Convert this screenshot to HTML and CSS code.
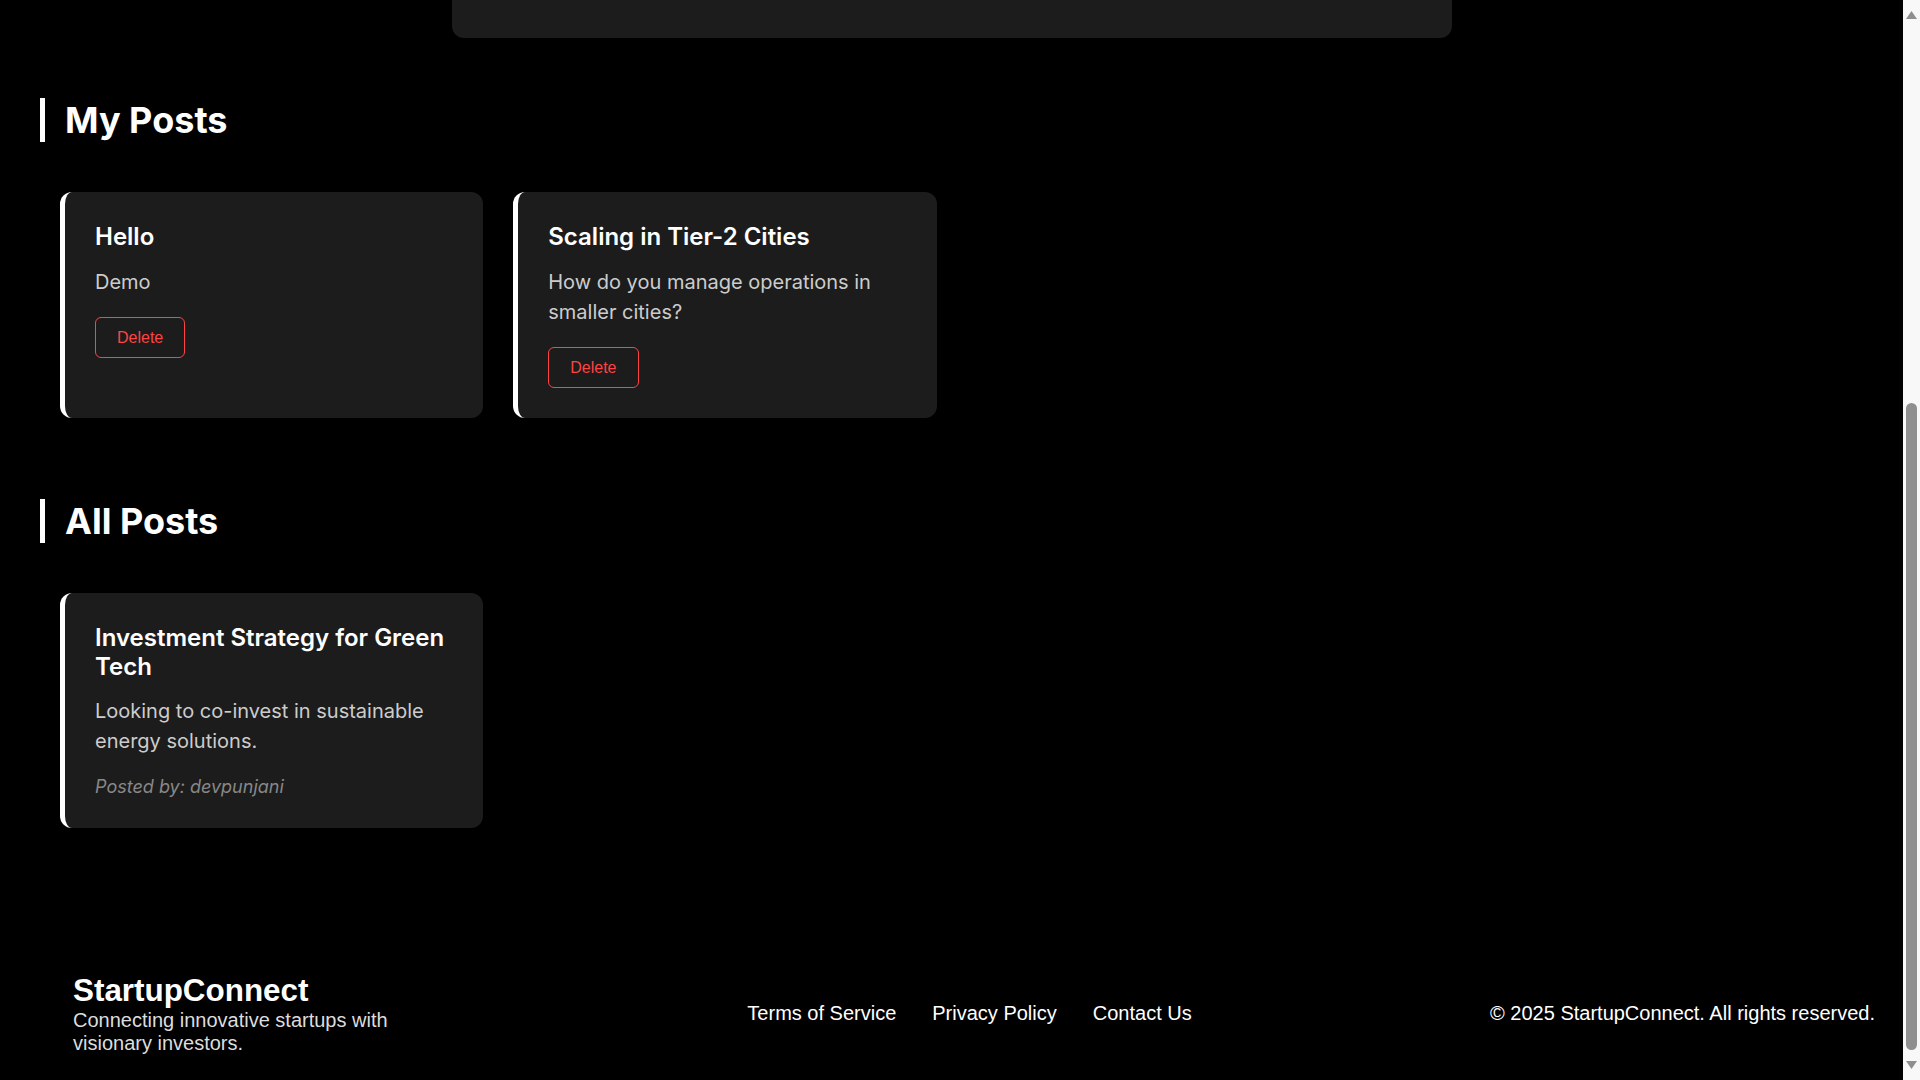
FILE: index.html
```
<!DOCTYPE html>
<html lang="en">
<head>
<meta charset="utf-8">
<title>StartupConnect – Community</title>
<link rel="stylesheet" href="styles.css">
</head>
<body>
<div class="viewport">
  <main class="page">
    <div class="composer-end"></div>

    <section class="section">
      <h2 class="section-title">My Posts</h2>
      <div class="post-grid">
        <article class="post-card">
          <h3 class="post-title">Hello</h3>
          <p class="post-body">Demo</p>
          <button class="btn-delete" type="button">Delete</button>
        </article>
        <article class="post-card">
          <h3 class="post-title">Scaling in Tier-2 Cities</h3>
          <p class="post-body">How do you manage operations in smaller cities?</p>
          <button class="btn-delete" type="button">Delete</button>
        </article>
      </div>
    </section>

    <section class="section">
      <h2 class="section-title">All Posts</h2>
      <div class="post-grid">
        <article class="post-card">
          <h3 class="post-title">Investment Strategy for Green Tech</h3>
          <p class="post-body">Looking to co-invest in sustainable energy solutions.</p>
          <p class="post-author">Posted by: devpunjani</p>
        </article>
      </div>
    </section>
  </main>

  <footer class="site-footer">
    <div class="footer-brand">
      <h3 class="footer-name">StartupConnect</h3>
      <p class="footer-tagline">Connecting innovative startups with visionary investors.</p>
    </div>
    <nav class="footer-links">
      <a href="#" class="footer-link">Terms of Service</a>
      <a href="#" class="footer-link">Privacy Policy</a>
      <a href="#" class="footer-link">Contact Us</a>
    </nav>
    <p class="copyright">© 2025 StartupConnect. All rights reserved.</p>
  </footer>
</div>

<div class="scrollbar" aria-hidden="true">
  <svg class="scroll-arrow" width="17" height="26" viewBox="0 0 17 26"><path d="M3 19 L8.5 11 L14 19 Z" fill="#8f8f8f"/></svg>
  <div class="scroll-track">
    <div class="scroll-thumb"></div>
  </div>
  <svg class="scroll-arrow" width="17" height="26" viewBox="0 0 17 26"><path d="M3 7 L8.5 15 L14 7 Z" fill="#8f8f8f"/></svg>
</div>
</body>
</html>
```
FILE: styles.css
```
* {
  box-sizing: border-box;
}

html,
body {
  margin: 0;
  padding: 0;
}

body {
  display: flex;
  height: 100vh;
  overflow: hidden;
  background: #000;
  color: #fff;
  font-family: Inter, "Noto Sans", sans-serif;
}

.viewport {
  flex: 1;
  min-width: 0;
}

.page {
  padding: 0 40px;
}

/* lower edge of the create-post card, scrolled mostly out of view */
.composer-end {
  max-width: 1000px;
  height: 38px;
  margin: 0 auto 60px;
  background: #1c1c1c;
  border-radius: 0 0 12px 12px;
}

/* sections */
.section {
  margin-bottom: 81px;
}

.section-title {
  margin: 0 0 50px;
  padding-left: 20px;
  border-left: 5px solid #fff;
  font-size: 36px;
  font-weight: 700;
  line-height: 44px;
}

.post-grid {
  display: grid;
  grid-template-columns: repeat(auto-fill, minmax(400px, 1fr));
  gap: 30px;
  margin: 0 20px;
}

.post-card {
  display: flex;
  flex-direction: column;
  align-items: flex-start;
  background: #1c1c1c;
  border-left: 5px solid #fff;
  border-radius: 12px;
  padding: 31px 30px 30px;
}

.post-title {
  margin: 0 0 15px;
  font-size: 24px;
  font-weight: 600;
  line-height: 1.2;
  color: #fff;
}

.post-body {
  margin: 0 0 20px;
  font-size: 20px;
  line-height: 1.5;
  color: #ccc;
}

.post-author {
  margin: 0;
  font-size: 18px;
  font-style: italic;
  line-height: 1.2;
  color: #888;
}

.btn-delete {
  padding: 10px 21px;
  background: transparent;
  color: #ff4343;
  border: 1px solid #ff4343;
  border-radius: 6px;
  font-family: "Liberation Sans", Arial, sans-serif;
  font-size: 16px;
  line-height: 19px;
  cursor: pointer;
}

/* footer */
.site-footer {
  display: flex;
  justify-content: space-between;
  align-items: center;
  padding: 64px 28px 26px 73px;
  font-family: "Liberation Sans", Arial, sans-serif;
  font-size: 20px;
  color: #fff;
}

.footer-brand {
  width: 376px;
}

.footer-name {
  margin: 0;
  font-size: 31.4px;
  font-weight: 700;
}

.footer-tagline {
  margin: 0;
  color: #ddd;
}

.footer-links {
  display: flex;
  gap: 36px;
}

.footer-link {
  color: #fff;
  text-decoration: none;
}

.copyright {
  margin: 0;
}

/* browser scrollbar as it appears in the captured state */
.scrollbar {
  flex: 0 0 17px;
  display: flex;
  flex-direction: column;
  background: #f8f8f8;
}

.scroll-arrow {
  flex: 0 0 26px;
  display: block;
}

.scroll-track {
  flex: 1;
  display: flex;
  flex-direction: column;
  padding: 377px 3px 4px;
}

.scroll-thumb {
  flex: 1;
  background: #8f8f8f;
  border-radius: 6px;
}
```
